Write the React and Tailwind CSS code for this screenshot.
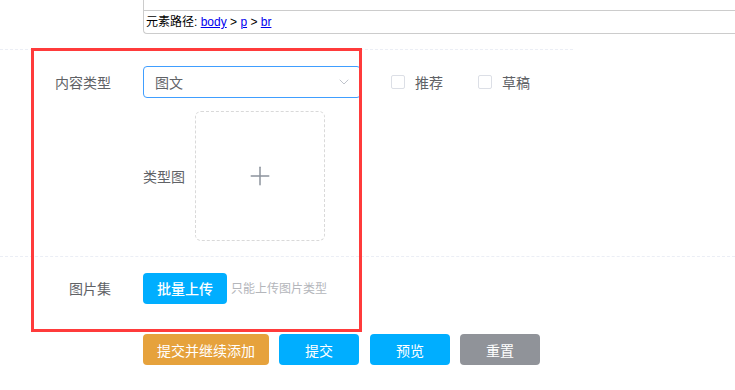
import React from "react";
import { ChevronDown, Plus } from "lucide-react";

const font = { fontFamily: '"Noto Sans CJK SC", "Noto Sans", sans-serif' };

const Checkbox = ({ label }) => (
  <label className="flex items-center gap-[10px] text-sm text-[#606266]">
    <span className="w-[14px] h-[14px] border border-[#dcdfe6] rounded-[2px] bg-white" />
    {label}
  </label>
);

const Btn = ({ children, className }) => (
  <button
    type="button"
    className={`h-[31px] rounded-[4px] text-sm text-white ${className}`}
  >
    {children}
  </button>
);

export default function App() {
  return (
    <div className="relative w-[735px] h-[390px] bg-white overflow-hidden" style={font}>
      {/* Editor bottom */}
      <div className="ml-[143px] h-[34px] border-l border-b border-[#cccccc] rounded-bl-[4px] flex flex-col">
        <div className="h-[11px] border-b border-[#cccccc]" />
        <div
          className="flex-1 flex items-center pl-[2px] text-[12px] text-black"
          style={{ fontFamily: '"Liberation Sans", "Noto Sans CJK SC", sans-serif' }}
        >
          元素路径:&nbsp;
          <a className="text-[#0000ee] underline">body</a>&nbsp;&gt;&nbsp;
          <a className="text-[#0000ee] underline">p</a>&nbsp;&gt;&nbsp;
          <a className="text-[#0000ee] underline">br</a>
        </div>
      </div>

      <div className="w-[573px] mt-[15px] border-b border-dashed border-[#ebeef5]" />

      {/* Content type section */}
      <div className="pt-[16px] pb-[15px] border-b border-dashed border-[#ebeef5]">
        <div className="flex items-center h-[32px]">
          <div className="w-[143px] pr-[32px] text-right text-sm text-[#606266]">内容类型</div>
          <div className="w-[218px] h-[32px] border border-[#409eff] rounded-[4px] flex items-center justify-between pl-[11px] pr-[8px]">
            <span className="text-sm text-[#606266]">图文</span>
            <ChevronDown size={16} strokeWidth={1.5} className="text-[#c0c4cc]" />
          </div>
          <div className="flex items-center gap-[35px] ml-[30px]">
            <Checkbox label="推荐" />
            <Checkbox label="草稿" />
          </div>
        </div>
        <div className="flex items-center mt-[13px] pl-[143px]">
          <span className="text-sm text-[#606266] w-[52px]">类型图</span>
          <div className="w-[130px] h-[130px] border border-dashed border-[#d9d9d9] rounded-[6px] flex items-center justify-center">
            <Plus size={30} strokeWidth={1.2} className="text-[#8c939d]" />
          </div>
        </div>
      </div>

      {/* Image set */}
      <div className="flex items-center mt-[15px] h-[32px]">
        <div className="w-[143px] pr-[32px] text-right text-sm text-[#606266]">图片集</div>
        <Btn className="w-[84px] bg-[#00aeff] font-medium">批量上传</Btn>
        <span className="ml-[4px] text-[12px] text-[#b4b6bb]">只能上传图片类型</span>
      </div>

      {/* Actions */}
      <div className="flex items-center gap-[10px] mt-[30px] pl-[143px]">
        <Btn className="w-[126px] bg-[#e6a23c]">提交并继续添加</Btn>
        <Btn className="w-[80px] bg-[#00aeff]">提交</Btn>
        <Btn className="w-[80px] bg-[#00aeff] ml-[1px]">预览</Btn>
        <Btn className="w-[80px] bg-[#909399]">重置</Btn>
      </div>

      {/* Annotation box */}
      <div className="absolute left-[31px] top-[48px] w-[331px] h-[284px] border-[3px] border-[#ff3b3b] pointer-events-none" />
    </div>
  );
}
